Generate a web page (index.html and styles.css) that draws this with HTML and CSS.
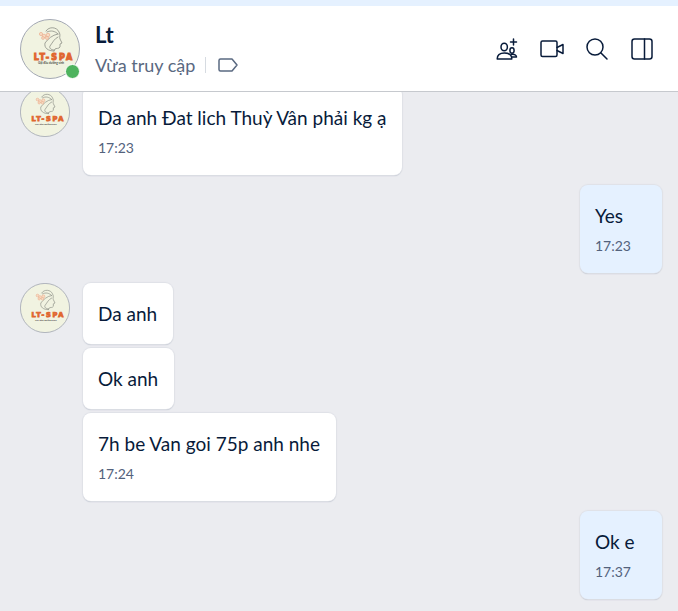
FILE: index.html
```html
<!DOCTYPE html>
<html lang="vi">
<head>
<meta charset="utf-8">
<meta name="viewport" content="width=device-width, initial-scale=1">
<title>Lt</title>
<link rel="stylesheet" href="styles.css">
</head>
<body>
<svg class="defs" aria-hidden="true">
  <symbol id="spa-logo" viewBox="0 0 60 60">
    <circle cx="30" cy="30" r="29.5" fill="#f1f3e1" stroke="#a3a8b3"/>
    <g fill="none" stroke="#8b8e85" stroke-width=".8" stroke-linecap="round">
      <path d="M26 12C29 7 37 8 39 13C41 16 39 18 40 20L42 24L40 25L40 28C39 30 36 29 35 30L34 32"/>
      <path d="M38 15C32 16 28 20 25 24C24 29 28 32 34 32"/>
      <path d="M38 18C34 20 33 23 30 27C29 29 31 31 34 31"/>
      <path d="M27 13C31 11 35 12 38 15"/>
    </g>
    <g fill="#f6dcc4" stroke="#eba583" stroke-width=".6">
      <circle cx="21" cy="15" r="1.6"/><circle cx="24" cy="17" r="1.8"/><circle cx="28" cy="16" r="1.8"/><circle cx="27" cy="19" r="1.5"/><circle cx="23" cy="19" r="1.4"/>
    </g>
    <text class="logo-name" x="34" y="41" text-anchor="middle">LT-SPA</text>
    <text class="logo-tagline" x="31" y="45" text-anchor="middle">Gội đầu dưỡng sinh</text>
  </symbol>
</svg>
<div class="app">
  <header class="header">
    <div class="avatar avatar-large">
      <svg role="img" aria-label="Lt"><use href="#spa-logo"/></svg>
      <span class="online"></span>
    </div>
    <div class="contact">
      <h1 class="name">Lt</h1>
      <div class="status">
        <span>Vừa truy cập</span>
        <button class="tag" aria-label="Phân loại">
          <svg width="20" height="14" viewBox="0 0 20 14"><path d="M2.5 1H14L19 7L14 13H2.5Q1 13 1 11.5V2.5Q1 1 2.5 1Z"/></svg>
        </button>
      </div>
    </div>
    <nav class="actions">
      <button class="action" aria-label="Thêm bạn vào nhóm">
        <svg width="24" height="24" viewBox="0 0 24 24"><ellipse cx="9.2" cy="10" rx="3.2" ry="3.8"/><path d="M2.2 22C2.2 18 5 16 9.5 16S16.8 18 16.8 22Z"/><ellipse cx="17" cy="13.5" rx="2.1" ry="2.7"/><path d="M16.5 17.5C19.5 17 21.5 18 21.5 20H17M18.5 2V8M15.5 5H21.5"/></svg>
      </button>
      <button class="action" aria-label="Cuộc gọi video">
        <svg width="24" height="24" viewBox="0 0 24 24"><rect x="1" y="4" width="16" height="15.5" rx="1.5"/><path d="M17 10.5L23 7.5V16.5L17 13.5"/></svg>
      </button>
      <button class="action" aria-label="Tìm kiếm tin nhắn">
        <svg width="24" height="24" viewBox="0 0 24 24"><circle cx="10" cy="10" r="8"/><path d="M16 16L22 22"/></svg>
      </button>
      <button class="action" aria-label="Thông tin hội thoại">
        <svg width="24" height="24" viewBox="0 0 24 24"><rect x="2" y="2" width="20" height="20" rx="2.5"/><path d="M14.5 2V22"/></svg>
      </button>
    </nav>
  </header>
  <main class="messages">
    <section class="group">
      <div class="avatar"><svg role="img" aria-label="Lt"><use href="#spa-logo"/></svg></div>
      <div class="stack">
        <div class="bubble"><p>Da anh Đat lich Thuỳ Vân phải kg ạ</p><time>17:23</time></div>
      </div>
    </section>
    <section class="group mine">
      <div class="bubble"><p>Yes</p><time>17:23</time></div>
    </section>
    <section class="group">
      <div class="avatar"><svg role="img" aria-label="Lt"><use href="#spa-logo"/></svg></div>
      <div class="stack">
        <div class="bubble"><p>Da anh</p></div>
        <div class="bubble"><p>Ok anh</p></div>
        <div class="bubble"><p>7h be Van goi 75p anh nhe</p><time>17:24</time></div>
      </div>
    </section>
    <section class="group mine">
      <div class="bubble"><p>Ok e</p><time>17:37</time></div>
    </section>
  </main>
</div>
</body>
</html>
```
FILE: styles.css
```css
* { box-sizing: border-box; }
body {
  margin: 0;
  color: #081b3a;
  font-family: Lato, "Noto Sans", sans-serif;
}
h1, p { margin: 0; }
button {
  padding: 0;
  border: 0;
  background: none;
  color: inherit;
}
.defs { position: absolute; width: 0; height: 0; }
.app {
  display: flex;
  flex-direction: column;
  height: 100vh;
  border-top: 6px solid #e5f1ff;
}
.header {
  display: flex;
  flex: none;
  align-items: center;
  gap: 15px;
  padding: 12px 20px;
  border-bottom: 1px solid #c6c9ce;
  background: #fff;
}
.avatar {
  position: relative;
  flex: none;
  width: 50px;
  height: 50px;
}
.avatar-large { width: 60px; height: 60px; }
.avatar svg { display: block; width: 100%; height: 100%; }
.logo-name {
  fill: #e0662f;
  stroke: #e0662f;
  stroke-width: 1px;
  font: 700 8px "DejaVu Sans", sans-serif;
  letter-spacing: 2px;
}
.logo-tagline { fill: #4c4e49; font: 700 3px Lato, sans-serif; }
.online {
  position: absolute;
  right: 0;
  bottom: 0;
  width: 15px;
  height: 15px;
  border: 1px solid #fff;
  border-radius: 50%;
  background: #4eb35e;
}
.contact { flex: 1; }
.name { font-size: 22px; font-weight: 700; line-height: 33px; }
.status {
  display: flex;
  align-items: center;
  gap: 10px;
  color: #5a6981;
  font-size: 18px;
  line-height: 28px;
}
.tag {
  display: flex;
  padding: 1px 0 1px 12px;
  border-left: 1px solid #d6dbe1;
}
.tag svg, .action svg {
  fill: none;
  stroke: currentColor;
  stroke-width: 1.5;
  stroke-linejoin: round;
  stroke-linecap: round;
}
.actions { display: flex; gap: 13px; }
.action {
  display: grid;
  place-items: center;
  width: 32px;
  height: 32px;
}
.messages {
  display: flex;
  flex: 1;
  flex-direction: column;
  justify-content: flex-end;
  gap: 10px;
  min-height: 0;
  overflow: hidden;
  padding: 0 16px 12px 20px;
  background: #ebecf0;
}
.group { display: flex; flex: none; align-items: flex-start; gap: 13px; }
.mine { justify-content: flex-end; }
.stack {
  display: flex;
  flex-direction: column;
  align-items: flex-start;
  gap: 4px;
}
.bubble {
  padding: 16px 16px 16px 15px;
  border-radius: 8px;
  background: #fff;
  box-shadow: 0 0 1px 1px #dfe1e7, 0 1px 1px #a9b0bf;
}
.mine .bubble { min-width: 82px; background: #e5f1ff; }
.bubble p { font-size: 19px; line-height: 29px; }
.bubble time {
  display: block;
  margin-top: 5px;
  color: #53627c;
  font-size: 14px;
  line-height: 22px;
}
```
